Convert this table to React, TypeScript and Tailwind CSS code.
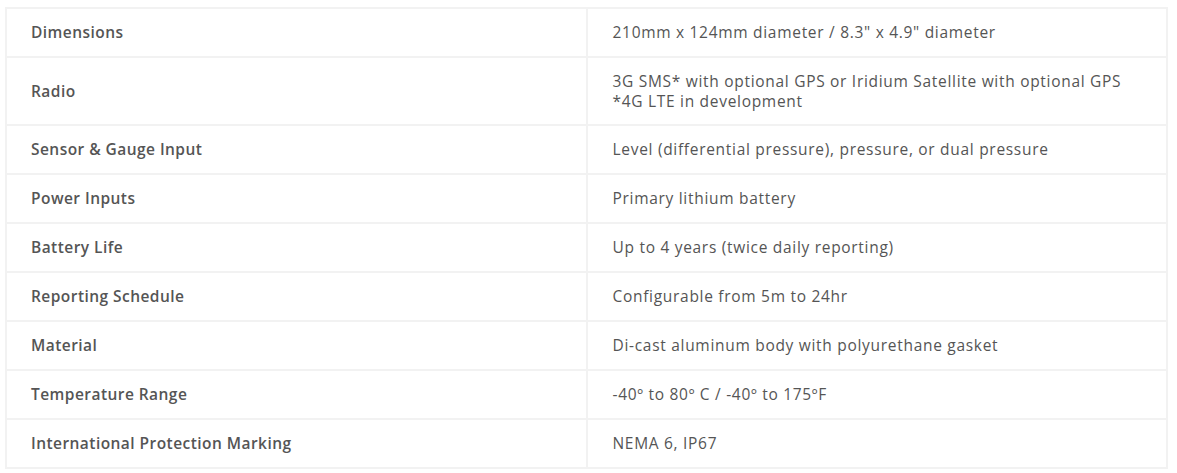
import React from "react";

const rows: [string, string[]][] = [
  ["Dimensions", ['210mm x 124mm diameter / 8.3" x 4.9" diameter']],
  ["Radio", ["3G SMS* with optional GPS or Iridium Satellite with optional GPS", "*4G LTE in development"]],
  ["Sensor & Gauge Input", ["Level (differential pressure), pressure, or dual pressure"]],
  ["Power Inputs", ["Primary lithium battery"]],
  ["Battery Life", ["Up to 4 years (twice daily reporting)"]],
  ["Reporting Schedule", ["Configurable from 5m to 24hr"]],
  ["Material", ["Di-cast aluminum body with polyurethane gasket"]],
  ["Temperature Range", ["-40º to 80º C / -40º to 175ºF"]],
  ["International Protection Marking", ["NEMA 6, IP67"]],
];

export default function App() {
  return (
    <div className="w-[1177px] h-[473px] bg-white pt-[7px] pl-[5px]" style={{ fontFamily: '"Open Sans", "Noto Sans", sans-serif' }}>
      <table className="w-[1163px] border-collapse table-fixed text-[15.5px] leading-[19px] text-[#555]">
        <tbody>
          {rows.map(([k, v]) => {
            const multi = v.length > 1;
            return (
              <tr key={k}>
                <td className="w-1/2 border-2 border-[#f2f2f2] pl-[24px] pr-6 py-[14px] font-semibold text-[#555] align-middle tracking-[0.45px]">{k}</td>
                <td
                  className={
                    multi
                      ? "w-1/2 border-2 border-[#f2f2f2] pl-[25px] pr-6 py-[13px] leading-[20px] align-middle tracking-[0.7px]"
                      : "w-1/2 border-2 border-[#f2f2f2] pl-[25px] pr-6 py-[14px] align-middle tracking-[0.7px]"
                  }
                >
                  {v.map((line, i) => (
                    <div key={i}>{line}</div>
                  ))}
                </td>
              </tr>
            );
          })}
        </tbody>
      </table>
    </div>
  );
}
